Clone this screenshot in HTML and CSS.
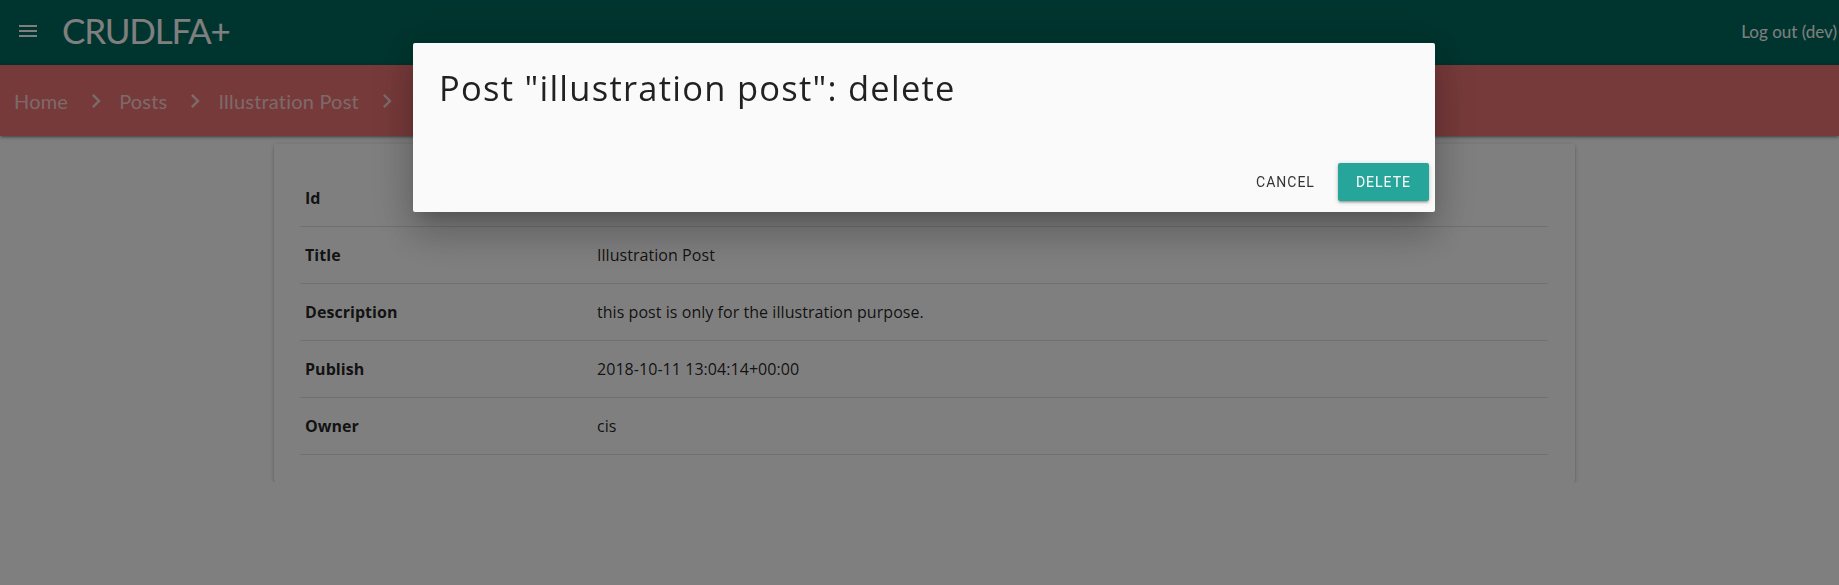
FILE: index.html
```html
<!DOCTYPE html>
<html lang="en">
<head>
<meta charset="utf-8">
<title>CRUDLFA+</title>
<link rel="stylesheet" href="styles.css">
</head>
<body>
<header class="topbar">
  <svg class="menu-icon" viewBox="0 0 24 24" width="24" height="24"><path d="M3 18h18v-2H3v2zm0-5h18v-2H3v2zm0-7v2h18V6H3z" fill="#fff"/></svg>
  <a class="brand">CRUDLFA+</a>
  <span class="spacer"></span>
  <a class="logout">Log out (dev)</a>
</header>
<nav class="crumbs">
  <a class="crumb">Home</a>
  <svg class="chev" viewBox="0 0 24 24" width="28" height="28"><path d="M10 6L8.59 7.41 13.17 12l-4.58 4.59L10 18l6-6z" fill="currentColor"/></svg>
  <a class="crumb">Posts</a>
  <svg class="chev" viewBox="0 0 24 24" width="28" height="28"><path d="M10 6L8.59 7.41 13.17 12l-4.58 4.59L10 18l6-6z" fill="currentColor"/></svg>
  <a class="crumb">Illustration Post</a>
  <svg class="chev" viewBox="0 0 24 24" width="28" height="28"><path d="M10 6L8.59 7.41 13.17 12l-4.58 4.59L10 18l6-6z" fill="currentColor"/></svg>
</nav>
<main class="page">
  <section class="card">
    <table class="detail">
      <colgroup><col class="label-col"><col></colgroup>
      <tbody>
        <tr><th>Id</th><td>1</td></tr>
        <tr><th>Title</th><td>Illustration Post</td></tr>
        <tr><th>Description</th><td>this post is only for the illustration purpose.</td></tr>
        <tr><th>Publish</th><td>2018-10-11 13:04:14+00:00</td></tr>
        <tr><th>Owner</th><td>cis</td></tr>
      </tbody>
    </table>
  </section>
</main>
<div class="overlay"></div>
<div class="modal">
  <div class="modal-content">
    <h4 class="modal-title">Post "illustration post": delete</h4>
  </div>
  <div class="modal-footer">
    <button class="btn-flat">Cancel</button>
    <button class="btn">Delete</button>
  </div>
</div>
</body>
</html>
```
FILE: styles.css
```css
* { box-sizing: border-box; }
html, body {
  margin: 0;
  padding: 0;
  background: #fff;
  font-family: "Lato", "Liberation Sans", sans-serif;
  color: rgba(0,0,0,0.87);
}
a { text-decoration: none; color: inherit; }

.topbar {
  height: 65px;
  background: #00695c;
  color: #fff;
  display: flex;
  align-items: center;
  padding: 0 2px 0 16px;
}
.menu-icon { display: block; margin-top: -4px; }
.brand {
  font-size: 35px;
  margin-left: 22px;
  margin-top: -6px;
  letter-spacing: -1.2px;
}
.spacer { flex: 1; }
.logout {
  font-size: 17px;
  margin-top: -2px;
}

.crumbs {
  height: 71px;
  background: #ef7474;
  display: flex;
  align-items: center;
  padding-left: 14px;
  color: rgba(255,255,255,0.7);
  box-shadow: 0 2px 2px 0 rgba(0,0,0,.14), 0 3px 1px -2px rgba(0,0,0,.12), 0 1px 5px 0 rgba(0,0,0,.2);
  position: relative;
}
.crumb { font-size: 20px; letter-spacing: 0.2px; }
.chev { display: block; margin: 0 9px 0 14px; }

.page { padding-top: 8px; }
.card {
  margin-left: 274px;
  width: 1301px;
  background: #fff;
  border-radius: 2px;
  padding: 26px 27px 27px 26px;
  box-shadow: 0 2px 2px 0 rgba(0,0,0,.14), 0 3px 1px -2px rgba(0,0,0,.12), 0 1px 5px 0 rgba(0,0,0,.2);
}
.detail {
  width: 100%;
  border-collapse: collapse;
  table-layout: fixed;
  font-family: "Open Sans", "Liberation Sans", sans-serif;
  font-size: 16px;
  letter-spacing: 0.05px;
  line-height: 24px;
}
.label-col { width: 292px; }
.detail th, .detail td {
  text-align: left;
  padding: 16px 5px;
  border-bottom: 1px solid rgba(0,0,0,0.12);
  color: rgba(0,0,0,0.87);
}
.detail th { font-weight: 700; }
.detail td { font-weight: 400; }

.overlay {
  position: fixed;
  inset: 0;
  background: rgba(0,0,0,0.5);
}
.modal {
  position: fixed;
  top: 43px;
  left: 413px;
  width: 1022px;
  background: #fafafa;
  border-radius: 2px;
  box-shadow: 0 24px 38px 3px rgba(0,0,0,.14), 0 9px 46px 8px rgba(0,0,0,.12), 0 11px 15px -7px rgba(0,0,0,.2);
}
.modal-content {
  height: 108px;
  padding: 24px 26px 0 26px;
}
.modal-title {
  margin: 0;
  font-family: "Open Sans", "Liberation Sans", sans-serif;
  font-size: 34.5px;
  font-weight: 400;
  letter-spacing: 1.25px;
  line-height: 42px;
  color: rgba(0,0,0,0.87);
}
.modal-footer {
  height: 61px;
  display: flex;
  align-items: center;
  justify-content: flex-end;
  padding: 0 6px;
  gap: 7px;
}
.btn-flat, .btn {
  font-family: "Roboto", "Liberation Sans", sans-serif;
  font-size: 14px;
  letter-spacing: 1px;
  text-transform: uppercase;
  height: 38px;
  border: none;
  border-radius: 2px;
  padding: 0 16px;
  cursor: pointer;
}
.btn-flat {
  background: transparent;
  color: #343434;
}
.btn {
  background: #26a69a;
  color: #fff;
  padding: 0 18px;
  box-shadow: 0 2px 2px 0 rgba(0,0,0,.14), 0 3px 1px -2px rgba(0,0,0,.12), 0 1px 5px 0 rgba(0,0,0,.2);
}
```
